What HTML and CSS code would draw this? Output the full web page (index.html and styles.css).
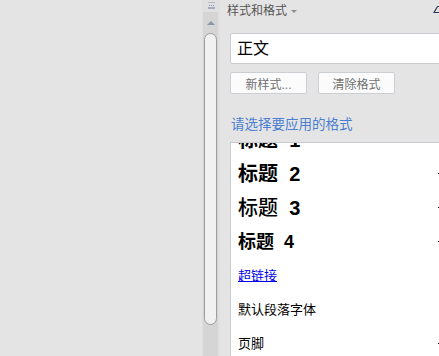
FILE: index.html
```html
<!DOCTYPE html>
<html lang="zh-CN">
<head>
    <meta charset="UTF-8">
    <title>样式和格式</title>
    <link rel="stylesheet" href="styles.css">
</head>
<body>
    <div class="window">
        <div class="canvas"></div>

        <div class="vscroll">
            <div class="grip">
                <svg width="7" height="7" viewBox="0 0 7 7">
                    <rect x="0" y="0" width="7" height="1" fill="#b4bccb"/>
                    <rect x="1" y="3" width="1" height="1" fill="#8a96ad"/>
                    <rect x="3" y="3" width="1" height="1" fill="#8a96ad"/>
                    <rect x="5" y="3" width="1" height="1" fill="#8a96ad"/>
                    <rect x="0" y="5" width="7" height="2" fill="#a3adbf"/>
                </svg>
            </div>
            <div class="track">
                <div class="arrow-up"></div>
                <div class="thumb"></div>
            </div>
        </div>

        <div class="pane">
            <div class="pane-head">
                <span class="pane-title">样式和格式</span>
                <span class="caret"></span>
                <svg class="pin" width="8" height="10" viewBox="0 0 8 10">
                    <path d="M4.5 1.5 H8 M4.5 1.5 L1 7.5 H8" fill="none" stroke="#2c3a55" stroke-width="1.2"/>
                </svg>
            </div>

            <div class="current-style">正文</div>

            <div class="actions">
                <button class="action-btn">新样式...</button>
                <button class="action-btn">清除格式</button>
            </div>

            <div class="hint">请选择要应用的格式</div>

            <div class="style-list">
                <ul class="styles">
                    <li class="style-item h1">标题&nbsp; <b>1</b><span class="mark"></span></li>
                    <li class="style-item h2">标题&nbsp; <b>2</b><span class="mark"></span></li>
                    <li class="style-item h3">标题&nbsp; <b>3</b><span class="mark"></span></li>
                    <li class="style-item h4">标题&nbsp; <b>4</b><span class="mark"></span></li>
                    <li class="style-item link"><a href="#">超链接</a></li>
                    <li class="style-item plain">默认段落字体</li>
                    <li class="style-item plain">页脚<span class="mark"></span></li>
                </ul>
            </div>
        </div>
    </div>
</body>
</html>
```

FILE: styles.css
```css
/* page frame */
body {
    margin: 0;
    background: #e5e4e4;
    font-family: "Liberation Sans", "Noto Sans CJK SC", sans-serif;
}
.window {
    display: flex;
    width: 439px;
    height: 356px;
    overflow: hidden;
}
.canvas {
    width: 202px;
    flex: none;
    background: #e5e4e4;
}

/* vertical scrollbar */
.vscroll {
    width: 18px;
    flex: none;
    display: flex;
    flex-direction: column;
    background: #e1e0e0;
}
.grip {
    height: 12px;
    display: flex;
    justify-content: center;
    align-items: flex-start;
    padding-top: 2px;
    box-sizing: border-box;
}
.track {
    flex: 1;
    margin-left: 1px;
    width: 15px;
    background: #d5d5d6;
    display: flex;
    flex-direction: column;
}
.arrow-up {
    height: 21px;
    display: flex;
    justify-content: center;
    align-items: center;
}
.arrow-up::before {
    content: "";
    border-left: 4px solid transparent;
    border-right: 4px solid transparent;
    border-bottom: 4px solid #8a95a8;
}
.thumb {
    height: 292px;
    margin: 0 1px;
    border: 1px solid #9c9c9c;
    border-radius: 7px;
    background: #f2f1f1;
    box-sizing: border-box;
}

/* styles pane */
.pane {
    flex: 1;
    min-width: 0;
    padding-left: 10px;
    overflow: hidden;
}
.pane-head {
    height: 24px;
    display: flex;
    align-items: center;
    position: relative;
    margin-left: -3px;
    margin-top: -1px;
}
.pane-title {
    font-size: 12px;
    color: #555;
    line-height: 22px;
}
.caret {
    margin-left: 4px;
    margin-top: 1px;
    border-left: 3px solid transparent;
    border-right: 3px solid transparent;
    border-top: 3px solid #8c8c8c;
}
.pin {
    position: absolute;
    left: 206px;
    top: 6px;
}
.current-style {
    margin-top: 10px;
    height: 31px;
    margin-right: -10px;
    box-sizing: border-box;
    border: 1px solid #c8ccd1;
    border-radius: 2px;
    background: #fff;
    padding-left: 6px;
    font-size: 16px;
    line-height: 29px;
    color: #000;
}
.actions {
    margin-top: 8px;
    display: flex;
    gap: 11px;
}
.action-btn {
    width: 77px;
    height: 22px;
    padding: 0;
    border: 1px solid #cbced3;
    border-radius: 2px;
    background: #fbfbfb;
    font-family: inherit;
    font-size: 12px;
    color: #717171;
}
.hint {
    margin-top: 22px;
    line-height: 18px;
    font-size: 13.5px;
    color: #4a7fd1;
    padding-left: 1px;
}
.style-list {
    margin-top: 8px;
    margin-right: -10px;
    height: 220px;
    border: 1px solid #c8ccd1;
    border-right: none;
    background: #fff;
    overflow: hidden;
}
.styles {
    list-style: none;
    margin: -20px 0 0;
    padding: 0;
}
.style-item {
    height: 34px;
    line-height: 34px;
    padding-left: 7px;
    position: relative;
    white-space: nowrap;
    color: #000;
}
.style-item b {
    font-weight: bold;
}
.mark {
    position: absolute;
    right: 9px;
    top: 16px;
    width: 2px;
    height: 1px;
    background: #000;
}
.h1, .h2 {
    font-size: 20px;
    font-weight: bold;
}
.h3 {
    font-size: 20px;
    font-weight: 500;
}
.h4 {
    font-size: 18px;
    font-weight: bold;
}
.link {
    font-size: 13px;
}
.link a {
    color: #0000ee;
}
.plain {
    font-size: 13px;
}
```
